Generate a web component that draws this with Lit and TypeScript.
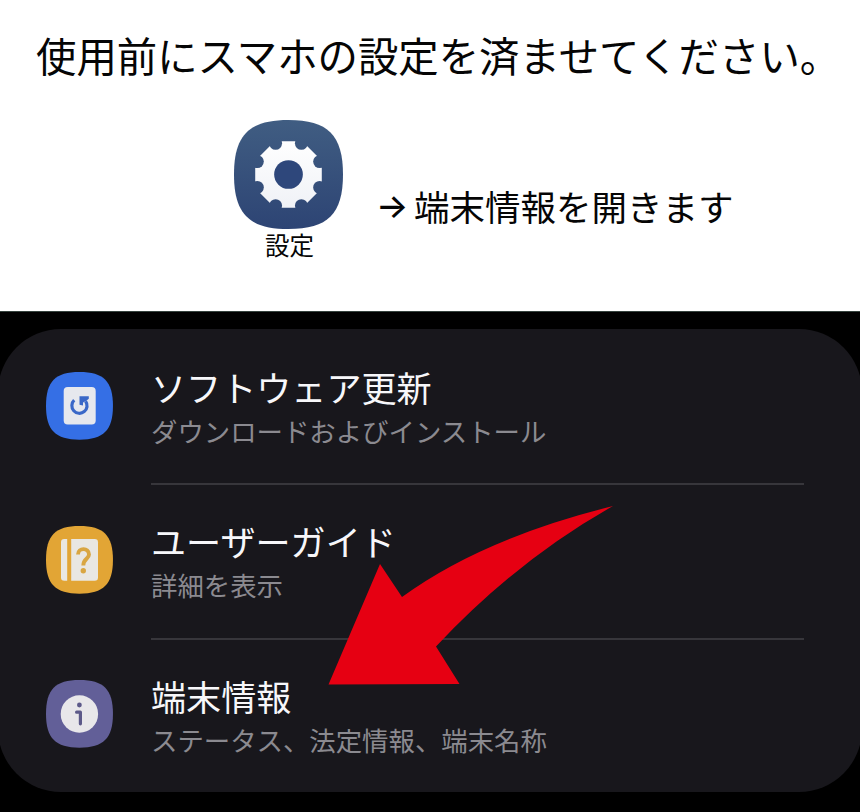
import { LitElement, html, svg, css, type SVGTemplateResult } from "lit";
import { customElement } from "lit/decorators.js";

const SQUIRCLE =
  "M54 0C93 0 108 15 108 54S93 108 54 108 0 93 0 54 15 0 54 0Z";

interface Item {
  title: string;
  sub: string;
  color: string;
  glyph: SVGTemplateResult;
}

const ITEMS: Item[] = [
  {
    title: "ソフトウェア更新",
    sub: "ダウンロードおよびインストール",
    color: "#356fe5",
    glyph: svg`
      <rect x="17.7" y="15" width="32" height="37.5" rx="4" fill="#e6e8ee"/>
      <path d="M28.200 28.200A7.600 7.600 0 1 0 39.600 29.200" fill="none" stroke="#3a68c8" stroke-width="3.200"/>
      <path d="M33.500 24.300H42.800V26.800L40 29L37 30.500V33.600L33.500 32.800Z" fill="#3a68c8"/>`,
  },
  {
    title: "ユーザーガイド",
    sub: "詳細を表示",
    color: "#e2a535",
    glyph: svg`
      <path d="M18.3 13H21.2V54.8H18.3A3.3 3.3 0 0 1 15 51.5V16.3A3.3 3.3 0 0 1 18.3 13Z" fill="#e9e7e2"/>
      <path d="M25.2 13H48.700A3.300 3.300 0 0 1 52 16.300V51.500A3.300 3.300 0 0 1 48.700 54.800H25.200Z" fill="#e9e7e2"/>
      <path d="M32 28.500C32 21.300 43 21.300 43 28.400C43 33 37.300 32.800 37.300 39.500" fill="none" stroke="#d9a642" stroke-width="3.900"/>
      <circle cx="37.300" cy="44.800" r="2.700" fill="#d9a642"/>`,
  },
  {
    title: "端末情報",
    sub: "ステータス、法定情報、端末名称",
    color: "#625f98",
    glyph: svg`
      <circle cx="33.4" cy="34" r="18.7" fill="#e8e7ea"/>
      <circle cx="33.4" cy="25" r="2.4" fill="#5c5989"/>
      <path d="M30.600 32.200H34.400V43.800" fill="none" stroke="#5c5989" stroke-width="3.200" stroke-linecap="round" stroke-linejoin="round"/>`,
  },
];

@customElement("app-root")
export class AppRoot extends LitElement {
  static styles = css`
    :host {
      display: block;
      position: relative;
      width: 860px;
      height: 812px;
      overflow: hidden;
      background: #fff;
      color: #050505;
      font-family: "Noto Sans CJK JP", sans-serif;
    }
    svg { display: block; }
    .intro {
      box-sizing: border-box;
      height: 312px;
      padding-top: 25px;
      border-bottom: 1px solid #35423d;
    }
    .heading {
      margin: 0;
      padding-left: 36px;
      font-size: 40.4px;
      font-weight: 400;
      line-height: 60px;
      white-space: nowrap;
    }
    .step {
      display: flex;
      padding: 35px 0 0 234px;
    }
    .app {
      display: flex;
      flex-direction: column;
      align-items: center;
      width: 109px;
    }
    .app-name {
      margin-left: 2px;
      font-size: 24.5px;
      line-height: 32px;
    }
    .instruction {
      display: flex;
      align-items: center;
      margin: 60px 0 0 33px;
      height: 52px;
      font-size: 35.5px;
      line-height: 52px;
      white-space: nowrap;
    }
    .to {
      width: 38px;
      font-family: Inter, sans-serif;
      font-size: 34px;
      font-weight: 500;
    }
    .phone {
      box-sizing: border-box;
      height: 500px;
      padding-top: 17px;
      background: #000;
    }
    .panel {
      box-sizing: border-box;
      height: 463px;
      margin: 0 -2px;
      padding: 0 58px 0 48px;
      border-radius: 63px;
      background: #18171c;
    }
    .row {
      display: flex;
      gap: 38px;
      height: 154.3px;
    }
    .icon { margin-top: 42.5px; flex: none; }
    .texts {
      box-sizing: border-box;
      flex: 1;
      padding-top: 34px;
      white-space: nowrap;
    }
    .row + .row .texts { border-top: 2px solid #37363b; padding-top: 32px; }
    .title {
      color: #f7f7fa;
      font-size: 35.1px;
      line-height: 48px;
    }
    .sub {
      color: #8b8a90;
      font-size: 26.4px;
      line-height: 40px;
    }
    .pointer {
      position: absolute;
      left: 0;
      top: 0;
      pointer-events: none;
    }
  `;

  private gear() {
    const steps = Array.from({ length: 8 }, (_, i) => ((22.5 + i * 45) * Math.PI) / 180);
    const at = (r: number, a: number) => [54 + r * Math.cos(a), 54 + r * Math.sin(a)];
    const octagon = steps.map((a) => at(35.7, a).join(",")).join(" ");
    const notches = steps.map((a) => {
      const [x, y] = at(33.4, a);
      return svg`<circle cx=${x} cy=${y} r="6.4" fill="#000"/>`;
    });
    return html`<svg width="109" height="109" viewBox="0 0 108 108">
      <defs>
        <linearGradient id="bg" x1="0" y1="0" x2="0" y2="1">
          <stop offset="0" stop-color="#405d82" />
          <stop offset="1" stop-color="#2d4474" />
        </linearGradient>
        <linearGradient id="fg" x1="0" y1="0" x2="0" y2="1">
          <stop offset="0" stop-color="#ffffff" />
          <stop offset="1" stop-color="#eff1f6" />
        </linearGradient>
        <mask id="teeth">
          <polygon points=${octagon} fill="#fff" />
          ${notches}
          <circle cx="54" cy="54" r="14.2" fill="#000" />
        </mask>
      </defs>
      <path d=${SQUIRCLE} fill="url(#bg)" />
      <circle cx="54" cy="54" r="16" fill="#2e477b" />
      <rect x="18" y="18" width="72" height="72" fill="url(#fg)" mask="url(#teeth)" />
    </svg>`;
  }

  private row(item: Item) {
    return html`<div class="row">
      <svg class="icon" width="67" height="68" viewBox="0 0 67 68">
        <path d=${SQUIRCLE} fill=${item.color} transform="scale(.62 .627)" />
        ${item.glyph}
      </svg>
      <div class="texts">
        <div class="title">${item.title}</div>
        <div class="sub">${item.sub}</div>
      </div>
    </div>`;
  }

  render() {
    return html`
      <section class="intro" lang="ja">
        <h1 class="heading">使用前にスマホの設定を済ませてください。</h1>
        <div class="step">
          <div class="app">${this.gear()}<span class="app-name">設定</span></div>
          <div class="instruction"><span class="to">→</span><span>端末情報を開きます</span></div>
        </div>
      </section>
      <section class="phone" lang="ja">
        <div class="panel">${ITEMS.map((i) => this.row(i))}</div>
      </section>
      <svg class="pointer" width="860" height="812" viewBox="0 0 860 812">
        <path fill="#e60012" d="M328.5 684.5L380 564L402 597Q482 538.5 613 506Q517 560 436 646.5L459.5 684Z" />
      </svg>
    `;
  }
}
